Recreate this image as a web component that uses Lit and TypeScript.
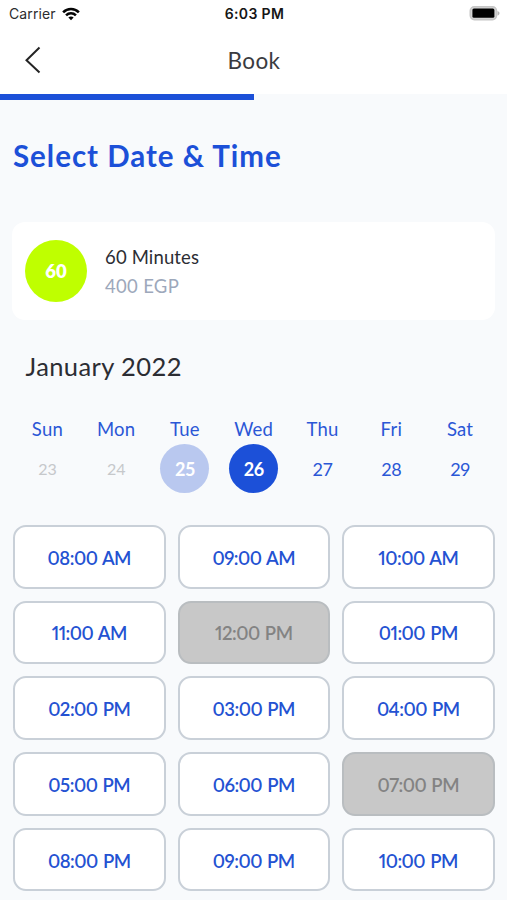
import { LitElement, html, css } from "lit";
import { customElement } from "lit/decorators.js";
import { classMap } from "lit/directives/class-map.js";

interface Day { name: string; date: number; state?: string; }

const DAYS: Day[] = [
  { name: "Sun", date: 23, state: "past" },
  { name: "Mon", date: 24, state: "past" },
  { name: "Tue", date: 25, state: "today" },
  { name: "Wed", date: 26, state: "selected" },
  { name: "Thu", date: 27 },
  { name: "Fri", date: 28 },
  { name: "Sat", date: 29 },
];

const SLOTS = [
  "08:00 AM", "09:00 AM", "10:00 AM", "11:00 AM", "12:00 PM", "01:00 PM",
  "02:00 PM", "03:00 PM", "04:00 PM", "05:00 PM", "06:00 PM", "07:00 PM",
  "08:00 PM", "09:00 PM", "10:00 PM",
];
const TAKEN = new Set(["12:00 PM", "07:00 PM"]);

@customElement("status-bar")
class StatusBar extends LitElement {
  static styles = css`
    :host { display: grid; grid-template-columns: 1fr auto 1fr; align-items: center; height: 27px; padding: 0 7px 0 9px; font: 400 14px/27px Inter, sans-serif; color: #2c2c2e; box-sizing: border-box; }
    .left { display: flex; align-items: center; gap: 6px; }
    .carrier { letter-spacing: 0.12px; }
    .time { font-weight: 600; letter-spacing: 0.35px; color: #161616; }
    .battery { justify-self: end; }
    svg { display: block; }
  `;
  render() {
    return html`
      <div class="left">
        <span class="carrier">Carrier</span>
        <svg width="18" height="14" viewBox="0 0 19 14" fill="none" stroke="#050505" stroke-width="2.7">
          <path d="M1.2 5.2C5.8 .5 13.2 .5 17.8 5.2" />
          <path d="M4.3 8.4C7.2 5.5 11.8 5.5 14.7 8.4" />
          <path d="M6.7 10.7C8.2 9.2 10.8 9.2 12.3 10.7L9.5 13.6Z" fill="#050505" stroke="none" />
        </svg>
      </div>
      <span class="time">6:03 PM</span>
      <svg class="battery" width="31" height="15" viewBox="0 0 31 15">
        <rect x="1.3" y=".8" width="26.2" height="12.8" rx="4" fill="#d6d6d6" stroke="#c6c6c6" stroke-width="1.6" />
        <rect x="3.4" y="2.6" width="22" height="9.2" rx="1.5" fill="#000" />
        <path d="M28.5 5C31.2 5.8 31.2 8.8 28.5 9.6Z" fill="#b5b5b5" />
      </svg>
    `;
  }
}

@customElement("day-cell")
class DayCell extends LitElement {
  static properties = { day: { attribute: false } };
  declare day: Day;
  static styles = css`
    :host { display: flex; flex-direction: column; align-items: center; color: #2b57d6; }
    .name { font-size: 18.5px; line-height: 28px; letter-spacing: 0.2px; }
    .date { display: grid; place-items: center; width: 49px; height: 49px; margin-top: 1px; border-radius: 50%; font-size: 18px; letter-spacing: -0.5px; }
    .past { color: #c6c8cb; font-size: 16px; letter-spacing: -0.2px; }
    .today { background: #b9c8ef; color: #fff; font-weight: 700; }
    .selected { background: #1c50d8; color: #fff; font-weight: 700; }
  `;
  render() {
    const s = this.day.state;
    return html`<span class="name">${this.day.name}</span>
      <span class=${classMap({ date: true, past: s === "past", today: s === "today", selected: s === "selected" })}>${this.day.date}</span>`;
  }
}

@customElement("app-root")
class AppRoot extends LitElement {
  static styles = css`
    :host { display: flex; flex-direction: column; height: 900px; overflow: hidden; background: #f8fafc; font-family: Lato, sans-serif; box-sizing: border-box; color: #2c2d33; }
    .top { background: #fff; height: 94px; flex: none; }
    .nav { display: grid; grid-template-columns: 1fr auto 1fr; align-items: center; height: 66px; padding-left: 24px; }
    .nav svg { display: block; }
    .title { grid-column: 2; font-size: 22.5px; line-height: 26px; letter-spacing: 0.4px; color: #3a3b41; padding: 1px 23px 0 0; }
    .progress { width: 254px; height: 6px; flex: none; background: #1c50d8; }
    main { padding: 36px 12.5px 0 13px; }
    h1 { margin: 0; font-size: 29.5px; line-height: 40px; font-weight: 700; letter-spacing: 0.98px; color: #1c50d8; }
    .card { display: flex; align-items: center; height: 98px; margin: 46px 0 0 -1px; padding-left: 13px; gap: 18px; box-sizing: border-box; background: #fff; border-radius: 13px; }
    .badge { display: grid; place-items: center; width: 62px; height: 62px; border-radius: 50%; background: #bfff00; color: #fff; font-size: 18.5px; font-weight: 800; }
    .info { display: flex; flex-direction: column; font-size: 18.5px; line-height: 29px; letter-spacing: 0.15px; padding-top: 2px; }
    .price { color: #9da8bb; letter-spacing: 0.3px; }
    .month { margin: 29px 0 0 12.5px; font-size: 25.5px; line-height: 34px; letter-spacing: 0.4px; }
    .week { display: grid; grid-template-columns: repeat(7, 1fr); margin: 32px 0 0; }
    .slots { display: grid; grid-template-columns: repeat(3, 1fr); grid-auto-rows: 63.5px; gap: 12.2px 12px; margin-top: 32px; }
    .slot { display: grid; place-items: center; box-sizing: border-box; padding-top: 2px; border: 2px solid #c9d0d8; border-radius: 13px; background: #fff; color: #2452d2; font-size: 18.5px; font-weight: 600; letter-spacing: -0.5px; word-spacing: 1px; font-feature-settings: "pnum"; }
    .taken { background: #c8c8c8; border-color: #b9bdc0; color: #838383; }
  `;
  render() {
    return html`
      <div class="top">
        <status-bar></status-bar>
        <div class="nav">
          <svg width="18" height="28" viewBox="0 0 18 28" fill="none" stroke="#242424" stroke-width="2"><path d="M15.5 1.5L2.5 14.2L15.5 26.5" /></svg>
          <span class="title">Book</span>
        </div>
      </div>
      <div class="progress"></div>
      <main>
        <h1>Select Date &amp; Time</h1>
        <section class="card">
          <div class="badge">60</div>
          <div class="info"><span>60 Minutes</span><span class="price">400 EGP</span></div>
        </section>
        <div class="month">January 2022</div>
        <div class="week">${DAYS.map((d) => html`<day-cell .day=${d}></day-cell>`)}</div>
        <div class="slots">${SLOTS.map((t) => html`<div class=${classMap({ slot: true, taken: TAKEN.has(t) })}>${t}</div>`)}</div>
      </main>
    `;
  }
}
